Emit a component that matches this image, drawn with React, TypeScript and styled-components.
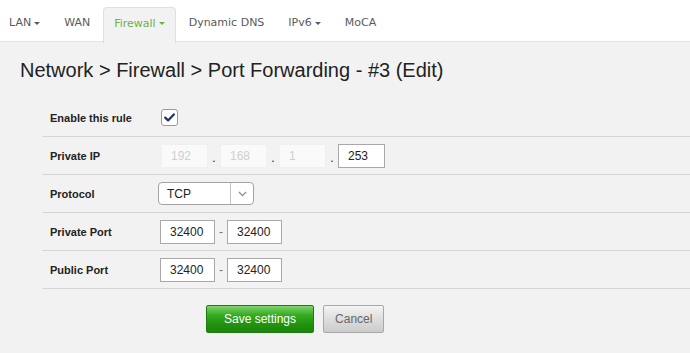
import React from "react";
import styled, { createGlobalStyle } from "styled-components";

const GlobalStyle = createGlobalStyle`
    html, body {
        margin: 0;
        padding: 0;
        background: #f2f2f2;
    }
    body {
        font-family: "Liberation Sans", Arial, sans-serif;
        color: #222;
    }
`;

const NavBar = styled.div`
    height: 42px;
    background: #fff;
    border-bottom: 1px solid #e3e3e3;
    box-sizing: border-box;
`;

const TabList = styled.ul`
    list-style: none;
    display: flex;
    align-items: flex-end;
    height: 42px;
    margin: 0 0 0 -2px;
    padding: 0;
`;

const Tab = styled.li<{ $active?: boolean }>`
    display: flex;
    align-items: center;
    box-sizing: border-box;
    padding: 0 10px 5px;
    margin-right: 2px;
    margin-bottom: ${(p) => (p.$active ? "-1px" : "0")};
    font-family: "DejaVu Sans", Verdana, sans-serif;
    font-size: 11px;
    color: ${(p) => (p.$active ? "#6cb33f" : "#5a5a5a")};
    background: ${(p) => (p.$active ? "#f2f2f2" : "transparent")};
    border: 1px solid ${(p) => (p.$active ? "#e0e0e0" : "transparent")};
    border-bottom: none;
    border-radius: 4px 4px 0 0;
    height: ${(p) => (p.$active ? "36px" : "35px")};
`;

const Caret = styled.span`
    display: inline-block;
    width: 0;
    height: 0;
    margin-left: 3px;
    margin-top: 1px;
    border-top: 3px solid currentColor;
    border-left: 3px solid transparent;
    border-right: 3px solid transparent;
`;

const Title = styled.h1`
    margin: 17px 0 17px 20px;
    font-size: 20px;
    font-weight: normal;
    line-height: 23px;
    color: #222;
`;

const Form = styled.div`
    margin-left: 42px;
`;

const Row = styled.div`
    display: flex;
    align-items: center;
    height: 38px;
    box-sizing: border-box;
    border-bottom: 1px solid #d6d6d6;
`;

const Label = styled.div`
    width: 110px;
    padding-left: 8px;
    font-size: 11px;
    font-weight: bold;
    color: #222;
`;

const Controls = styled.div<{ $shift?: number }>`
    display: flex;
    align-items: center;
    margin-left: ${(p) => p.$shift ?? 0}px;
`;

const Checkbox = styled.span`
    width: 17px;
    height: 17px;
    box-sizing: border-box;
    border: 1px solid #9a9a9a;
    border-radius: 3px;
    background: #fff;
    display: flex;
    align-items: center;
    justify-content: center;
`;

const TextInput = styled.span<{ $w: number; $disabled?: boolean }>`
    width: ${(p) => p.$w}px;
    height: 24px;
    box-sizing: border-box;
    display: flex;
    align-items: center;
    padding-left: 9px;
    font-size: 12px;
    color: ${(p) => (p.$disabled ? "#cfcfcf" : "#222")};
    background: ${(p) => (p.$disabled ? "#fafafa" : "#fff")};
    border: 1px solid ${(p) => (p.$disabled ? "#f0f0f0" : "#a9a9a9")};
`;

const Sep = styled.span<{ $dot?: boolean }>`
    width: 12px;
    height: 24px;
    display: flex;
    justify-content: center;
    align-items: ${(p) => (p.$dot ? "flex-end" : "center")};
    font-size: 12px;
    line-height: ${(p) => (p.$dot ? "20px" : "24px")};
    color: ${(p) => (p.$dot ? "#222" : "#777")};
`;

const Select = styled.span`
    width: 96px;
    height: 23px;
    box-sizing: border-box;
    display: flex;
    align-items: stretch;
    border: 1px solid #a3a3a3;
    border-radius: 4px;
    background: #fff;
    font-size: 12px;
`;

const SelectValue = styled.span`
    flex: 1;
    display: flex;
    align-items: center;
    padding-left: 8px;
    color: #222;
`;

const SelectArrow = styled.span`
    width: 22px;
    border-left: 1px solid #c4c4c4;
    display: flex;
    align-items: center;
    justify-content: center;
`;

const Actions = styled.div`
    display: flex;
    gap: 9px;
    padding: 16px 0 0 164px;
`;

const Button = styled.span<{ $primary?: boolean }>`
    height: 28px;
    box-sizing: border-box;
    display: flex;
    align-items: center;
    justify-content: center;
    padding: 0 ${(p) => (p.$primary ? "17px" : "11px")};
    font-size: 12px;
    border-radius: 2px;
    color: ${(p) => (p.$primary ? "#fff" : "#666")};
    border: 1px solid ${(p) => (p.$primary ? "#1f7d12" : "#a8a8a8")};
    background: ${(p) =>
        p.$primary
            ? "linear-gradient(to bottom, #7ed46a 0%, #36ab22 35%, #22920f 70%, #1c860c 100%)"
            : "linear-gradient(to bottom, #f4f4f4 0%, #dedede 50%, #cbcbcb 100%)"};
`;

const CheckIcon = () => (
    <svg width="11" height="9" viewBox="0 0 11 9">
        <path d="M1.2 4.6 L4.1 7.4 L9.8 1.4" fill="none" stroke="#1f3466" strokeWidth="2.2" strokeLinecap="round" strokeLinejoin="round" />
    </svg>
);

const ChevronIcon = () => (
    <svg width="9" height="6" viewBox="0 0 9 6">
        <path d="M1 1 L4.5 4.6 L8 1" fill="none" stroke="#8a8a8a" strokeWidth="1.2" />
    </svg>
);

const tabs = [
    { name: "LAN", caret: true },
    { name: "WAN" },
    { name: "Firewall", caret: true, active: true },
    { name: "Dynamic DNS" },
    { name: "IPv6", caret: true },
    { name: "MoCA" },
];

const App: React.FC = () => {
    const ip = ["192", "168", "1"];

    return (
        <>
            <GlobalStyle />
            <NavBar>
                <TabList>
                    {tabs.map((t) => (
                        <Tab key={t.name} $active={t.active}>
                            {t.name}
                            {t.caret && <Caret />}
                        </Tab>
                    ))}
                </TabList>
            </NavBar>
            <Title>Network &gt; Firewall &gt; Port Forwarding - #3 (Edit)</Title>
            <Form>
                <Row>
                    <Label>Enable this rule</Label>
                    <Controls $shift={1}>
                        <Checkbox>
                            <CheckIcon />
                        </Checkbox>
                    </Controls>
                </Row>
                <Row>
                    <Label>Private IP</Label>
                    <Controls $shift={1}>
                        {ip.map((part) => (
                            <React.Fragment key={part}>
                                <TextInput $w={47} $disabled>
                                    {part}
                                </TextInput>
                                <Sep $dot>.</Sep>
                            </React.Fragment>
                        ))}
                        <TextInput $w={47}>253</TextInput>
                    </Controls>
                </Row>
                <Row>
                    <Label>Protocol</Label>
                    <Controls $shift={-2}>
                        <Select>
                            <SelectValue>TCP</SelectValue>
                            <SelectArrow>
                                <ChevronIcon />
                            </SelectArrow>
                        </Select>
                    </Controls>
                </Row>
                <Row>
                    <Label>Private Port</Label>
                    <Controls>
                        <TextInput $w={55}>32400</TextInput>
                        <Sep>-</Sep>
                        <TextInput $w={55}>32400</TextInput>
                    </Controls>
                </Row>
                <Row>
                    <Label>Public Port</Label>
                    <Controls>
                        <TextInput $w={55}>32400</TextInput>
                        <Sep>-</Sep>
                        <TextInput $w={55}>32400</TextInput>
                    </Controls>
                </Row>
                <Actions>
                    <Button $primary>Save settings</Button>
                    <Button>Cancel</Button>
                </Actions>
            </Form>
        </>
    );
};

export default App;
